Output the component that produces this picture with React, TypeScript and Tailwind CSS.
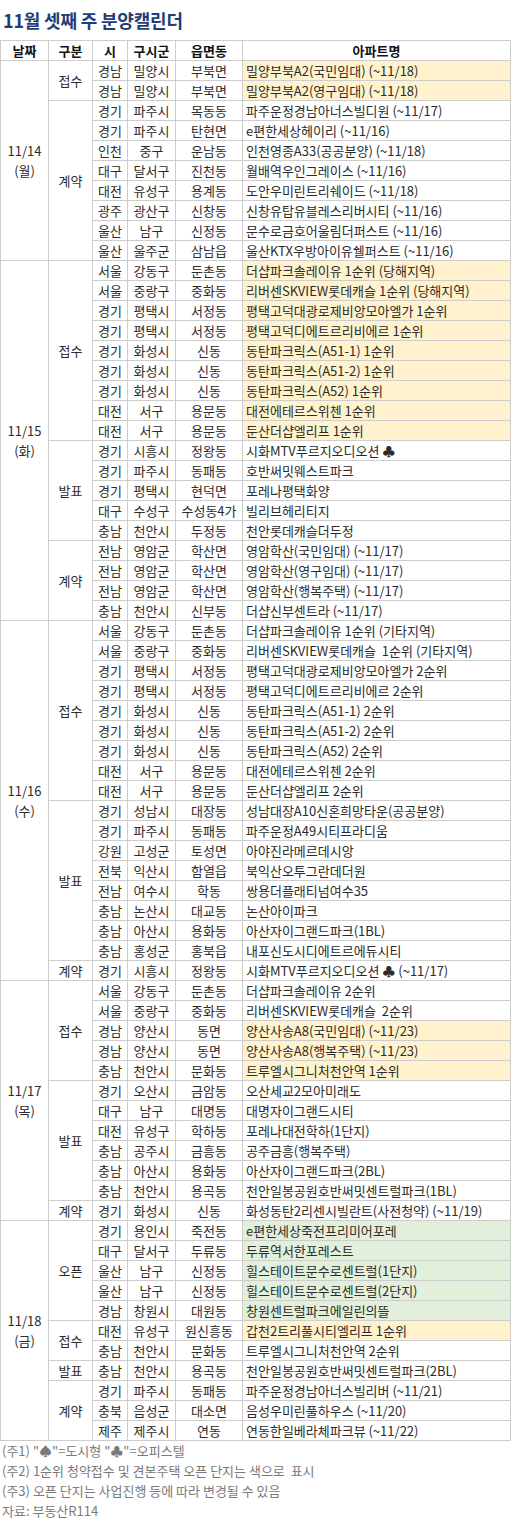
import React from "react";

type Row = [string, string, string, string, ("y" | "g")?];
type Group = { type: string; rows: Row[] };
type Day = { date: string; dow: string; groups: Group[] };

const days: Day[] = [
  {
    date: "11/14",
    dow: "(월)",
    groups: [
      {
        type: "접수",
        rows: [
          ["경남", "밀양시", "부북면", "밀양부북A2(국민임대) (~11/18)", "y"],
          ["경남", "밀양시", "부북면", "밀양부북A2(영구임대) (~11/18)", "y"],
        ],
      },
      {
        type: "계약",
        rows: [
          ["경기", "파주시", "목동동", "파주운정경남아너스빌디원 (~11/17)"],
          ["경기", "파주시", "탄현면", "e편한세상헤이리 (~11/16)"],
          ["인천", "중구", "운남동", "인천영종A33(공공분양) (~11/18)"],
          ["대구", "달서구", "진천동", "월배역우인그레이스 (~11/16)"],
          ["대전", "유성구", "용계동", "도안우미린트리쉐이드 (~11/18)"],
          ["광주", "광산구", "신창동", "신창유탑유블레스리버시티 (~11/16)"],
          ["울산", "남구", "신정동", "문수로금호어울림더퍼스트 (~11/16)"],
          ["울산", "울주군", "삼남읍", "울산KTX우방아이유쉘퍼스트 (~11/16)"],
        ],
      },
    ],
  },
  {
    date: "11/15",
    dow: "(화)",
    groups: [
      {
        type: "접수",
        rows: [
          ["서울", "강동구", "둔촌동", "더샵파크솔레이유 1순위 (당해지역)", "y"],
          ["서울", "중랑구", "중화동", "리버센SKVIEW롯데캐슬 1순위 (당해지역)", "y"],
          ["경기", "평택시", "서정동", "평택고덕대광로제비앙모아엘가 1순위", "y"],
          ["경기", "평택시", "서정동", "평택고덕디에트르리비에르 1순위", "y"],
          ["경기", "화성시", "신동", "동탄파크릭스(A51-1) 1순위", "y"],
          ["경기", "화성시", "신동", "동탄파크릭스(A51-2) 1순위", "y"],
          ["경기", "화성시", "신동", "동탄파크릭스(A52) 1순위", "y"],
          ["대전", "서구", "용문동", "대전에테르스위첸 1순위", "y"],
          ["대전", "서구", "용문동", "둔산더샵엘리프 1순위", "y"],
        ],
      },
      {
        type: "발표",
        rows: [
          ["경기", "시흥시", "정왕동", "시화MTV푸르지오디오션 ♣"],
          ["경기", "파주시", "동패동", "호반써밋웨스트파크"],
          ["경기", "평택시", "현덕면", "포레나평택화양"],
          ["대구", "수성구", "수성동4가", "빌리브헤리티지"],
          ["충남", "천안시", "두정동", "천안롯데캐슬더두정"],
        ],
      },
      {
        type: "계약",
        rows: [
          ["전남", "영암군", "학산면", "영암학산(국민임대) (~11/17)"],
          ["전남", "영암군", "학산면", "영암학산(영구임대) (~11/17)"],
          ["전남", "영암군", "학산면", "영암학산(행복주택) (~11/17)"],
          ["충남", "천안시", "신부동", "더샵신부센트라 (~11/17)"],
        ],
      },
    ],
  },
  {
    date: "11/16",
    dow: "(수)",
    groups: [
      {
        type: "접수",
        rows: [
          ["서울", "강동구", "둔촌동", "더샵파크솔레이유 1순위 (기타지역)"],
          ["서울", "중랑구", "중화동", "리버센SKVIEW롯데캐슬\u00a0\u00a01순위 (기타지역)"],
          ["경기", "평택시", "서정동", "평택고덕대광로제비앙모아엘가 2순위"],
          ["경기", "평택시", "서정동", "평택고덕디에트르리비에르 2순위"],
          ["경기", "화성시", "신동", "동탄파크릭스(A51-1) 2순위"],
          ["경기", "화성시", "신동", "동탄파크릭스(A51-2) 2순위"],
          ["경기", "화성시", "신동", "동탄파크릭스(A52) 2순위"],
          ["대전", "서구", "용문동", "대전에테르스위첸 2순위"],
          ["대전", "서구", "용문동", "둔산더샵엘리프 2순위"],
        ],
      },
      {
        type: "발표",
        rows: [
          ["경기", "성남시", "대장동", "성남대장A10신혼희망타운(공공분양)"],
          ["경기", "파주시", "동패동", "파주운정A49시티프라디움"],
          ["강원", "고성군", "토성면", "아야진라메르데시앙"],
          ["전북", "익산시", "함열읍", "북익산오투그란데더원"],
          ["전남", "여수시", "학동", "쌍용더플래티넘여수35"],
          ["충남", "논산시", "대교동", "논산아이파크"],
          ["충남", "아산시", "용화동", "아산자이그랜드파크(1BL)"],
          ["충남", "홍성군", "홍북읍", "내포신도시디에트르에듀시티"],
        ],
      },
      {
        type: "계약",
        rows: [["경기", "시흥시", "정왕동", "시화MTV푸르지오디오션 ♣ (~11/17)"]],
      },
    ],
  },
  {
    date: "11/17",
    dow: "(목)",
    groups: [
      {
        type: "접수",
        rows: [
          ["서울", "강동구", "둔촌동", "더샵파크솔레이유 2순위"],
          ["서울", "중랑구", "중화동", "리버센SKVIEW롯데캐슬\u00a0\u00a02순위"],
          ["경남", "양산시", "동면", "양산사송A8(국민임대) (~11/23)", "y"],
          ["경남", "양산시", "동면", "양산사송A8(행복주택) (~11/23)", "y"],
          ["충남", "천안시", "문화동", "트루엘시그니처천안역 1순위", "y"],
        ],
      },
      {
        type: "발표",
        rows: [
          ["경기", "오산시", "금암동", "오산세교2모아미래도"],
          ["대구", "남구", "대명동", "대명자이그랜드시티"],
          ["대전", "유성구", "학하동", "포레나대전학하(1단지)"],
          ["충남", "공주시", "금흥동", "공주금흥(행복주택)"],
          ["충남", "아산시", "용화동", "아산자이그랜드파크(2BL)"],
          ["충남", "천안시", "용곡동", "천안일봉공원호반써밋센트럴파크(1BL)"],
        ],
      },
      {
        type: "계약",
        rows: [["경기", "화성시", "신동", "화성동탄2리센시빌란트(사전청약) (~11/19)"]],
      },
    ],
  },
  {
    date: "11/18",
    dow: "(금)",
    groups: [
      {
        type: "오픈",
        rows: [
          ["경기", "용인시", "죽전동", "e편한세상죽전프리미어포레", "g"],
          ["대구", "달서구", "두류동", "두류역서한포레스트", "g"],
          ["울산", "남구", "신정동", "힐스테이트문수로센트럴(1단지)", "g"],
          ["울산", "남구", "신정동", "힐스테이트문수로센트럴(2단지)", "g"],
          ["경남", "창원시", "대원동", "창원센트럴파크에일린의뜰", "g"],
        ],
      },
      {
        type: "접수",
        rows: [
          ["대전", "유성구", "원신흥동", "갑천2트리풀시티엘리프 1순위", "y"],
          ["충남", "천안시", "문화동", "트루엘시그니처천안역 2순위"],
        ],
      },
      {
        type: "발표",
        rows: [["충남", "천안시", "용곡동", "천안일봉공원호반써밋센트럴파크(2BL)"]],
      },
      {
        type: "계약",
        rows: [
          ["경기", "파주시", "동패동", "파주운정경남아너스빌리버 (~11/21)"],
          ["충북", "음성군", "대소면", "음성우미린풀하우스 (~11/20)"],
          ["제주", "제주시", "연동", "연동한일베라체파크뷰 (~11/22)"],
        ],
      },
    ],
  },
];

const cell = "border border-[#cdcdcd] p-0 h-5 leading-[18px] text-center whitespace-nowrap overflow-hidden";

export default function App() {
  return (
    <div className="w-[512px] bg-white font-['Noto_Sans_CJK_KR',sans-serif] text-[13px] text-[#2b2b2b]">
      <div className="h-10 flex items-center pl-[3px]">
        <h1 className="text-[18px] font-bold text-[#1f3d79] tracking-[-0.2px]">11월 셋째 주 분양캘린더</h1>
      </div>

      <table className="w-[511px] table-fixed border-collapse">
        <colgroup>
          <col className="w-[48px]" />
          <col className="w-[44px]" />
          <col className="w-[35px]" />
          <col className="w-[48px]" />
          <col className="w-[67px]" />
          <col />
        </colgroup>
        <thead>
          <tr className="h-5">
            {["날짜", "구분", "시", "구시군", "읍면동", "아파트명"].map((h) => (
              <th key={h} className={`${cell} font-bold text-[#111]`}>
                {h}
              </th>
            ))}
          </tr>
        </thead>
        <tbody>
          {days.map((day) => {
            const dayRows = day.groups.reduce((n, g) => n + g.rows.length, 0);
            return day.groups.map((group, gi) =>
              group.rows.map((r, ri) => (
                <tr key={`${day.date}-${gi}-${ri}`} className="h-5">
                  {gi === 0 && ri === 0 && (
                    <td rowSpan={dayRows} className={`${cell} leading-[20px]`}>
                      <div>{day.date}</div>
                      <div>{day.dow}</div>
                    </td>
                  )}
                  {ri === 0 && (
                    <td rowSpan={group.rows.length} className={cell}>
                      {group.type}
                    </td>
                  )}
                  <td className={cell}>{r[0]}</td>
                  <td className={cell}>{r[1]}</td>
                  <td className={cell}>{r[2]}</td>
                  <td
                    className={`${cell} text-left pl-[3px] ${
                      r[4] === "y" ? "bg-[#fff2cc]" : r[4] === "g" ? "bg-[#e2efda]" : ""
                    }`}
                  >
                    {r[3]}
                  </td>
                </tr>
              ))
            );
          })}
        </tbody>
      </table>

      <div className="text-[13px] text-[#7a7a7a] pl-[2px] leading-5">
        <p>(주1) "♠"=도시형 "♣"=오피스텔</p>
        <p>(주2) 1순위 청약접수 및 견본주택 오픈 단지는 색으로&nbsp;&nbsp;표시</p>
        <p>(주3) 오픈 단지는 사업진행 등에 따라 변경될 수 있음</p>
        <p>자료: 부동산R114</p>
      </div>
    </div>
  );
}
